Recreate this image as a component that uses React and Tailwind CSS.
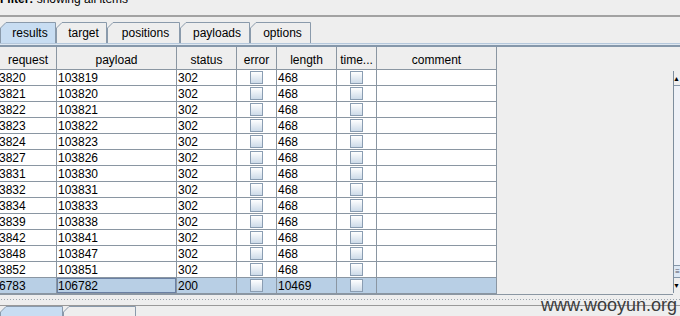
const cols = [
  { key: "request", w: 57 },
  { key: "payload", w: 120 },
  { key: "status", w: 60 },
  { key: "error", w: 40 },
  { key: "length", w: 60 },
  { key: "time...", w: 40 },
  { key: "comment", w: 120 },
];

const rows = [
  ["3820", "103819", "302", "468"],
  ["3821", "103820", "302", "468"],
  ["3822", "103821", "302", "468"],
  ["3823", "103822", "302", "468"],
  ["3824", "103823", "302", "468"],
  ["3827", "103826", "302", "468"],
  ["3831", "103830", "302", "468"],
  ["3832", "103831", "302", "468"],
  ["3834", "103833", "302", "468"],
  ["3839", "103838", "302", "468"],
  ["3842", "103841", "302", "468"],
  ["3848", "103847", "302", "468"],
  ["3852", "103851", "302", "468"],
  ["6783", "106782", "200", "10469"],
];

const tabs = [
  { label: "results", w: 56, on: true },
  { label: "target", w: 51 },
  { label: "positions", w: 73 },
  { label: "payloads", w: 70 },
  { label: "options", w: 61 },
];

function Tab({ label, w, on }) {
  return (
    <div className="relative h-[21px] flex items-center justify-center pl-[4px]" style={{ width: w }}>
      <svg className="absolute inset-0" width={w} height="21">
        <path
          d={`M0.5 21 L0.5 6 L6 0.5 L${w - 0.5} 0.5 L${w - 0.5} 21`}
          fill={on ? "#c8ddf2" : "#eeeeee"}
          stroke="#8a9aab"
        />
      </svg>
      <span className="relative">{label}</span>
    </div>
  );
}

function Check() {
  return <div className="w-[13px] h-[13px] border border-[#8a9db2] bg-gradient-to-b from-white to-[#cddbe9]" />;
}

export default function App() {
  return (
    <div className="relative w-[680px] h-[316px] overflow-hidden bg-[#eeeeee] text-[12px] text-black font-['Liberation_Sans',Arial,sans-serif]">
      <div className="h-[15px] overflow-hidden">
        <div className="-mt-[8px] leading-[14px] whitespace-nowrap">
          <b>Filter:</b> showing all items
        </div>
      </div>
      <div className="h-[2px] bg-[#a2a2a2]" />
      <div className="h-[5px]" />

      <div className="flex h-[21px]">
        {tabs.map((t) => (
          <Tab key={t.label} {...t} />
        ))}
      </div>
      <div className="h-[4px] border-t border-[#b5c8dc] bg-[#dfe8f1] border-b-2 border-b-[#8597aa]" />

      <div className="flex h-[23px]">
        {cols.map((c) => (
          <div
            key={c.key}
            className="flex items-center justify-center pt-[3px] border-r border-b border-[#8a96a2] shrink-0"
            style={{ width: c.w }}
          >
            {c.key}
          </div>
        ))}
      </div>

      <div className="flex h-[224px]">
        <div className="w-[497px] flex flex-col border-r border-[#8a96a2]">
          {rows.map((r, i) => {
            const sel = i === rows.length - 1;
            return (
              <div key={i} className={`flex h-[16px] leading-[17px] ${sel ? "bg-[#b8cfe5]" : "bg-white"}`}>
                <div className="w-[57px] border-r border-b border-[#8a96a2] -indent-[1px] overflow-hidden">{r[0]}</div>
                <div className={`w-[120px] border-r border-b border-[#8a96a2] pl-[1px] ${sel ? "shadow-[inset_0_0_0_1px_#6a80a3]" : ""}`}>{r[1]}</div>
                <div className="w-[60px] border-r border-b border-[#8a96a2] pl-[1px]">{r[2]}</div>
                <div className="w-[40px] border-r border-b border-[#8a96a2] flex items-center justify-center pb-[1px]">
                  <Check />
                </div>
                <div className="w-[60px] border-r border-b border-[#8a96a2] pl-[1px]">{r[3]}</div>
                <div className="w-[40px] border-r border-b border-[#8a96a2] flex items-center justify-center pb-[1px]">
                  <Check />
                </div>
                <div className="w-[119px] border-b border-[#8a96a2]" />
              </div>
            );
          })}
        </div>
        <div className="flex-1" />
        <div className="w-[7px] mt-[1px] h-[222px] border-l border-[#7d8d9d] flex flex-col bg-[#eef1f7]">
          <div className="h-[15px] border-b border-[#8597aa] flex items-center justify-end bg-[#eeeeee] text-[7px] leading-none">▲</div>
          <div className="flex-1" />
          <div className="h-[13px] border-y border-[#8597aa] bg-[#dde8f4] flex items-center justify-end text-[8px] leading-none text-[#556]">≡</div>
          <div className="h-[15px] flex items-center justify-end bg-[#eeeeee] text-[7px] leading-none">▼</div>
        </div>
      </div>

      <div className="h-[1px] bg-[#8a96a2] w-[673px]" />
      <div className="h-[3px]" />
      <div className="h-[4px] bg-[radial-gradient(#9aa4ad_0.6px,transparent_0.7px)] bg-[length:3px_3px]" />
      <div className="h-[3px]" />
      <div className="h-[1px] bg-[#999999]" />
      <div className="flex h-[12px]">
        <div className="relative w-[63px] h-[12px]">
          <svg className="absolute inset-0" width="63" height="12">
            <path d="M0.5 12 L0.5 6 L6 0.5 L62.5 0.5 L62.5 12" fill="#c8ddf2" stroke="#8a9aab" />
          </svg>
        </div>
        <div className="relative w-[73px] h-[12px]">
          <svg className="absolute inset-0" width="73" height="12">
            <path d="M0.5 12 L0.5 6 L6 0.5 L72.5 0.5 L72.5 12" fill="#eeeeee" stroke="#8a9aab" />
          </svg>
        </div>
      </div>

      <div className="absolute left-[541px] top-[296px] text-[18px] leading-[18px] text-[#3c3c3c] whitespace-nowrap">
        www.wooyun.org
      </div>
    </div>
  );
}
